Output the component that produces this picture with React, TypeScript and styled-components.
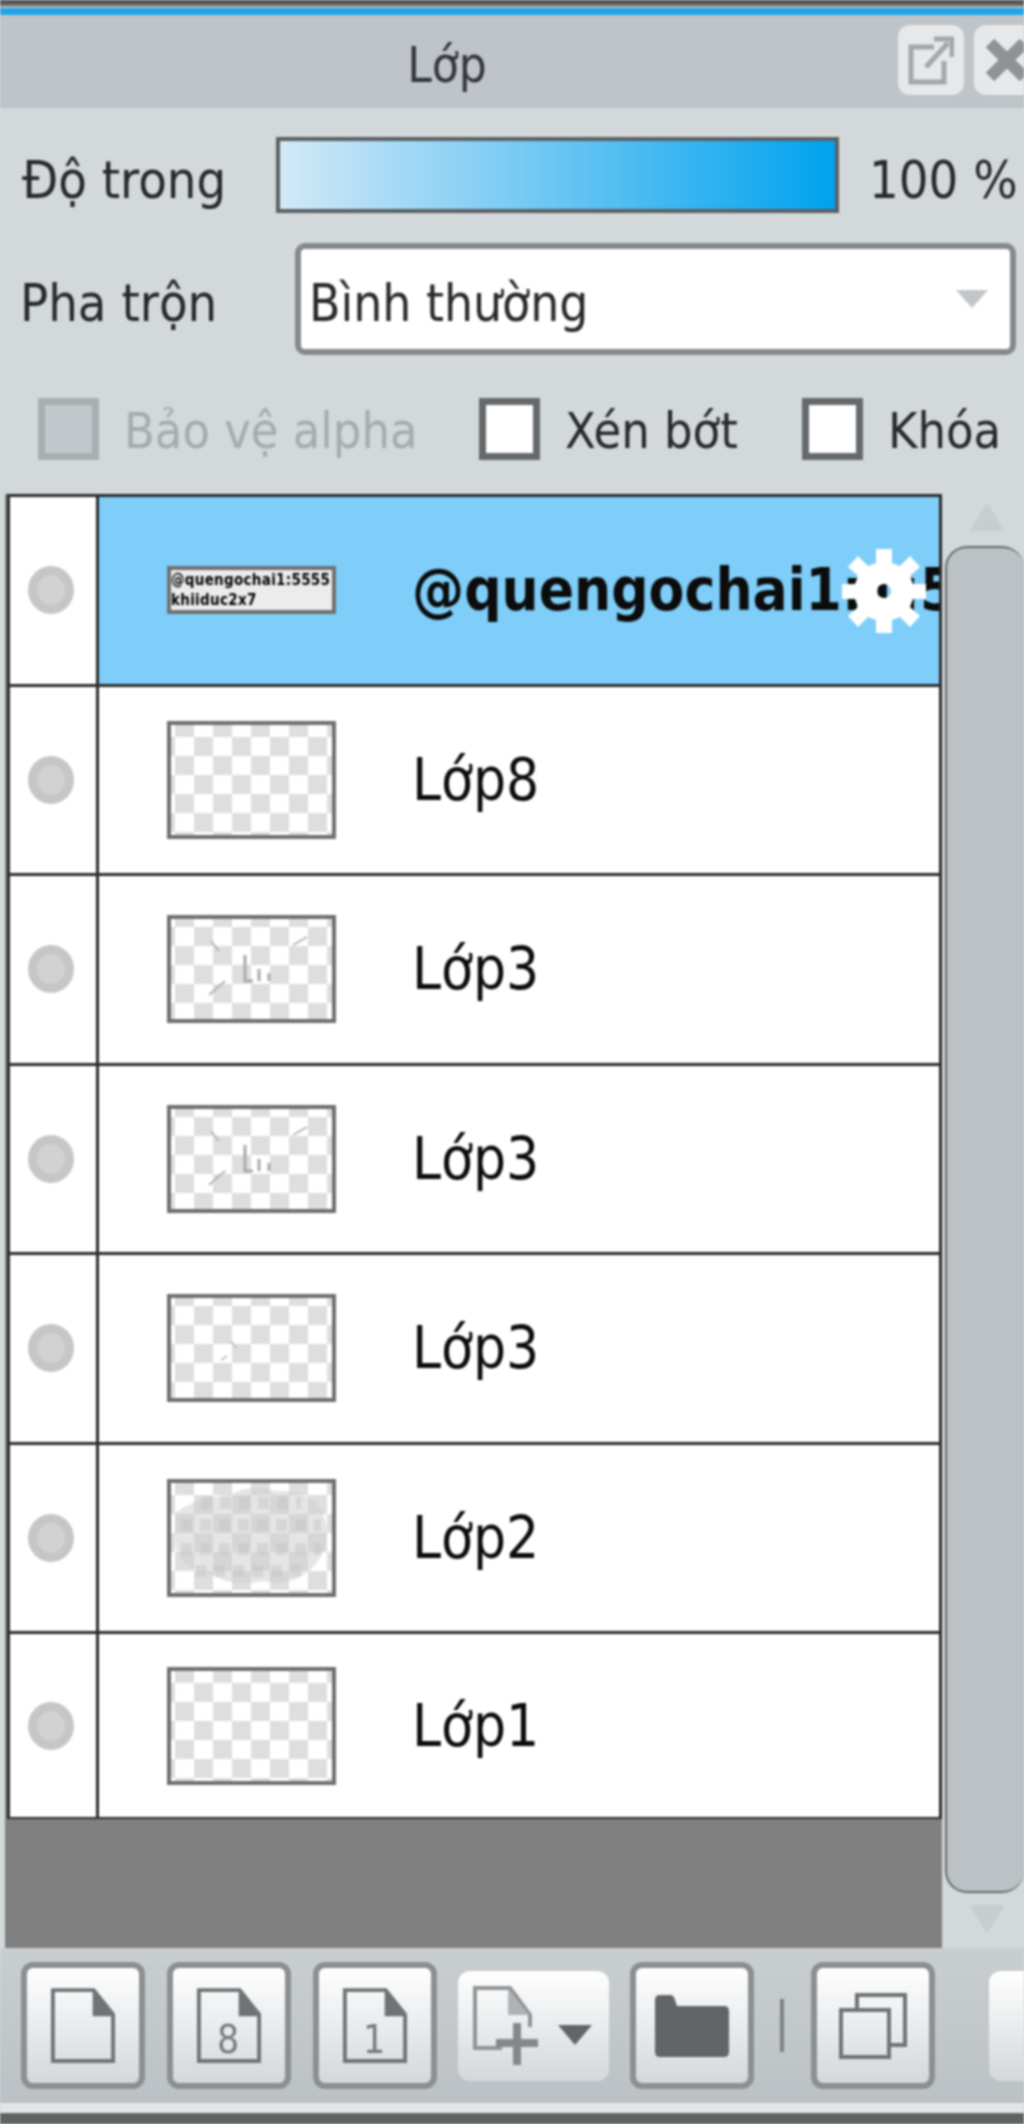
import { FC } from "react";
import styled, { createGlobalStyle } from "styled-components";

//types
type ThumbKind = "text" | "empty" | "marks" | "speck" | "blob";
type LayerData = { name: string; thumb: ThumbKind; height: number; active?: boolean };

const layers: LayerData[] = [
  { name: "@quengochai1:1:5555", thumb: "text", height: 48, active: true },
  { name: "Lớp8", thumb: "empty", height: 118 },
  { name: "Lớp3", thumb: "marks", height: 108 },
  { name: "Lớp3", thumb: "marks", height: 108 },
  { name: "Lớp3", thumb: "speck", height: 108 },
  { name: "Lớp2", thumb: "blob", height: 118 },
  { name: "Lớp1", thumb: "empty", height: 118 },
];

const GlobalStyle = createGlobalStyle`
  html, body {
    margin: 0;
    padding: 0;
    background: #d3d8db;
    overflow: hidden;
  }
`;

const Panel = styled.div`
  width: 1024px;
  height: 2124px;
  display: flex;
  flex-direction: column;
  overflow: hidden;
  background: #d3d8db;
  color: #26282b;
  font-family: "DejaVu Sans Condensed", "DejaVu Sans", sans-serif;
  font-stretch: condensed;
  font-size: 52px;
  filter: blur(1px);
`;

const WindowEdge = styled.div`
  height: 8px;
  flex: none;
  background: linear-gradient(#444 0, #666 60%, #d5d8da 100%);
`;

const AccentLine = styled.div`
  height: 7px;
  flex: none;
  background: #1ea6ea;
`;

const TitleBar = styled.div`
  height: 93px;
  flex: none;
  position: relative;
  display: flex;
  align-items: center;
  justify-content: center;
  padding: 8px 130px 0 0;
  box-sizing: border-box;
  background: #bfc4c8;
  font-size: 49px;
  color: #33363a;
`;

const TitleButtons = styled.div`
  position: absolute;
  top: 10px;
  left: 898px;
  display: flex;
  gap: 10px;
`;

const TitleButton = styled.div`
  width: 66px;
  height: 70px;
  flex: none;
  display: flex;
  align-items: center;
  justify-content: center;
  border-radius: 12px;
  background: #e6e8ea;
`;

const OpacityRow = styled.div`
  height: 76px;
  margin-top: 29px;
  flex: none;
  display: flex;
  align-items: center;
  padding-left: 22px;
`;

const OpacityLabel = styled.div`
  width: 254px;
  flex: none;
  padding-top: 10px;
  white-space: nowrap;
`;

const Slider = styled.div`
  width: 563px;
  height: 76px;
  flex: none;
  box-sizing: border-box;
  border: 4px solid #5b6063;
  background: linear-gradient(90deg, #d2e9f7, #00a2ef);
`;

const OpacityValue = styled.div`
  margin-left: 30px;
  padding-top: 10px;
  white-space: nowrap;
`;

const BlendRow = styled.div`
  height: 112px;
  margin-top: 30px;
  flex: none;
  display: flex;
  align-items: center;
  padding-left: 20px;
`;

const BlendLabel = styled.div`
  width: 275px;
  flex: none;
  padding-top: 8px;
  white-space: nowrap;
`;

const Select = styled.div`
  width: 721px;
  height: 112px;
  flex: none;
  box-sizing: border-box;
  display: flex;
  align-items: center;
  justify-content: space-between;
  padding: 8px 22px 0 8px;
  border: 6px solid #85898c;
  border-radius: 10px;
  background: #fff;
  font-size: 51px;
`;

const SelectArrow = styled.div`
  width: 0;
  height: 0;
  margin-top: -8px;
  border-left: 16px solid transparent;
  border-right: 16px solid transparent;
  border-top: 18px solid #c2c6c9;
`;

const OptionsRow = styled.div`
  height: 62px;
  margin-top: 43px;
  flex: none;
  display: flex;
  align-items: center;
  padding-left: 38px;
`;

const Option = styled.div<{ $width: number; $disabled?: boolean }>`
  width: ${(props) => props.$width}px;
  flex: none;
  display: flex;
  align-items: center;
  gap: 25px;
  white-space: nowrap;
  color: ${(props) => (props.$disabled ? "#a6abae" : "#26282b")};
  font-size: 50px;
`;

const OptionText = styled.span`
  padding-top: 3px;
`;

const CheckBox = styled.div<{ $disabled?: boolean }>`
  width: 61px;
  height: 62px;
  flex: none;
  box-sizing: border-box;
  border: 7px solid ${(props) => (props.$disabled ? "#a9aeb1" : "#65696c")};
  background: ${(props) => (props.$disabled ? "#c2c7cb" : "#fff")};
`;

const ListArea = styled.div`
  height: 1454px;
  margin-top: 34px;
  flex: none;
  display: flex;
`;

const ListColumn = styled.div`
  width: 937px;
  margin-left: 5px;
  flex: none;
  background: #808080;
`;

const LayerTable = styled.div`
  margin-left: 2px;
  width: 935px;
  box-sizing: border-box;
  border: 3px solid #2b2b2b;
  border-bottom-width: 2px;
  background: #fff;
`;

const LayerRow = styled.div<{ $last?: boolean }>`
  height: ${(props) => (props.$last ? 183 : 189.5)}px;
  box-sizing: border-box;
  display: flex;
  border-bottom: ${(props) => (props.$last ? "0" : "3px solid #2b2b2b")};
`;

const EyeCell = styled.div`
  width: 89px;
  flex: none;
  display: flex;
  align-items: center;
  padding-left: 18px;
  box-sizing: border-box;
  border-right: 3px solid #2b2b2b;
`;

const EyeDot = styled.div`
  width: 46px;
  height: 48px;
  box-sizing: border-box;
  border-radius: 50%;
  border: 9px solid #c6c6c6;
  background: #d2d2d2;
`;

const LayerBody = styled.div<{ $active?: boolean }>`
  flex: 1;
  min-width: 0;
  position: relative;
  overflow: hidden;
  display: flex;
  align-items: center;
  padding-left: 68px;
  background: ${(props) => (props.$active ? "#7ecef9" : "#fff")};
`;

const Thumb = styled.div<{ $height: number }>`
  position: relative;
  width: 169px;
  height: ${(props) => props.$height}px;
  flex: none;
  box-sizing: border-box;
  overflow: hidden;
  border: 4px solid #6f6f6f;
  background: repeating-conic-gradient(#dedede 0 25%, #fff 0 50%)
    4px ${(props) => (props.$height > 110 ? 12 : 8)}px / 38px 38px;
`;

const ThumbText = styled.div`
  background: #ececec;
  height: 100%;
  font-size: 15px;
  font-weight: 700;
  letter-spacing: 0.3px;
  line-height: 20px;
  color: #000;
  white-space: nowrap;
`;

const LayerName = styled.div<{ $active?: boolean }>`
  margin-left: 76px;
  white-space: nowrap;
  color: #0c0c0c;
  font-size: 58px;
  font-weight: ${(props) => (props.$active ? 700 : 400)};
`;

const GearOverlay = styled.div`
  position: absolute;
  left: 743px;
  top: 52px;
  display: flex;
`;

const ScrollColumn = styled.div`
  flex: 1;
  margin-left: 3px;
  display: flex;
  flex-direction: column;
  align-items: center;
`;

const ScrollArrow = styled.div<{ $down?: boolean }>`
  margin-top: ${(props) => (props.$down ? 12 : 9)}px;
  margin-left: 4px;
  width: 0;
  height: 0;
  flex: none;
  border-left: 18px solid transparent;
  border-right: 18px solid transparent;
  ${(props) =>
    props.$down
      ? "border-top: 28px solid #c8cdd0;"
      : "border-bottom: 28px solid #c8cdd0;"}
`;

const ScrollThumb = styled.div`
  margin-top: 15px;
  width: 100%;
  height: 1347px;
  flex: none;
  box-sizing: border-box;
  border: 2px solid #666a6d;
  border-right: 0;
  border-radius: 22px;
  background: #bcc1c5;
`;

const Toolbar = styled.div`
  height: 155px;
  flex: none;
  display: flex;
  align-items: center;
  padding: 0 0 0 21px;
  overflow: hidden;
  background: linear-gradient(#c9ced1, #bcc1c5);
`;

const ToolButton = styled.div<{ $plain?: boolean; $gap: number; $width?: number }>`
  width: ${(props) => props.$width || 124}px;
  height: 127px;
  flex: none;
  box-sizing: border-box;
  display: flex;
  align-items: center;
  justify-content: center;
  margin-right: ${(props) => props.$gap}px;
  border: ${(props) => (props.$plain ? "0" : "6px solid #8b8f92")};
  border-radius: 12px;
  background: linear-gradient(#fff, #d4d8db);
  ${(props) => props.$plain && "height: 110px;"}
`;

const ToolSeparator = styled.div`
  width: 4px;
  height: 53px;
  flex: none;
  margin-right: 27px;
  background: #7d8184;
`;

const BottomEdge = styled.div`
  flex: 1;
  border-top: 10px solid #e3e6e8;
  background: #5f6462;
`;

const PageIcon: FC<{ label?: string }> = ({ label }) => (
  <svg width="66" height="78" viewBox="0 0 68 80">
    <path d="M3 3H45L65 28V76H3Z" fill="none" stroke="#6f7376" strokeWidth="4" />
    <path d="M44 3L66 30H44Z" fill="#6f7376" />
    {label && (
      <text x="33" y="68" textAnchor="middle" fontSize="40" fill="#77797c">
        {label}
      </text>
    )}
  </svg>
);

const NewFromIcon = () => (
  <svg width="124" height="82" viewBox="0 0 124 82">
    <path d="M30 63H3V3H38L58 30V42" fill="none" stroke="#909396" strokeWidth="4" />
    <path d="M36 3L57 30H36Z" fill="#b0b3b6" />
    <path d="M45 38V80M24 58H66" stroke="#85888b" strokeWidth="8" />
    <path d="M86 40H120L103 60Z" fill="#626568" />
  </svg>
);

const FolderIcon = () => (
  <svg width="76" height="64" viewBox="0 0 76 64">
    <path d="M1 6Q1 1 6 1H16Q20 1 21 6L23 12H70Q75 12 75 17V58Q75 63 70 63H6Q1 63 1 58Z" fill="#626568" />
  </svg>
);

const CopyIcon = () => (
  <svg width="70" height="68" viewBox="0 0 70 68">
    <path d="M19 18V3H67V53H52" fill="none" stroke="#6f7376" strokeWidth="4" />
    <rect x="3" y="18" width="48" height="47" fill="none" stroke="#6f7376" strokeWidth="4" />
  </svg>
);

const PopoutIcon = () => (
  <svg width="46" height="50" viewBox="0 0 46 50">
    <path d="M26 12H3V47H36V26" fill="none" stroke="#a3a7aa" strokeWidth="5" />
    <path d="M18 32L40 8M26 4H44V22" fill="none" stroke="#a3a7aa" strokeWidth="5" />
  </svg>
);

const CloseIcon = () => (
  <svg width="46" height="46" viewBox="0 0 46 46">
    <path d="M6 6L40 40M40 6L6 40" stroke="#8f9396" strokeWidth="12" />
  </svg>
);

// the hole in the middle lets the layer name show through
const GearIcon = () => (
  <svg width="84" height="84" viewBox="0 0 84 84">
    <path
      fill="#fff"
      fillRule="evenodd"
      d="M34 0H50V14L58 17L68 7L78 18L68 27L71 35H84V50H71L68 58L78 67L68 78L58 68L50 71V84H34V71L26 68L16 78L6 67L16 58L13 50H0V35H13L16 27L6 18L16 7L26 17L34 14ZM42 35A7 7 0 1 0 42.01 35Z"
    />
  </svg>
);

const ThumbMarks: FC<{ kind: ThumbKind }> = ({ kind }) => {
  if (kind === "marks") {
    return (
      <svg width="161" height="100" viewBox="0 0 161 100">
        <path d="M74 36V62H82M88 50V62M98 54V62" stroke="#a9a9a9" strokeWidth="3" fill="none" />
        <path d="M38 76L54 62M122 26L136 18M40 22L48 32" stroke="#b4b4b4" strokeWidth="2" fill="none" />
      </svg>
    );
  }
  if (kind === "speck") {
    return (
      <svg width="161" height="100" viewBox="0 0 161 100">
        <path d="M60 44L66 50M50 62L56 58" stroke="#c2c2c2" strokeWidth="2" fill="none" />
      </svg>
    );
  }
  if (kind === "blob") {
    return (
      <svg width="161" height="110" viewBox="0 0 161 110">
        <path
          d="M4 30Q30 12 60 12Q80 0 104 8Q146 6 154 36Q162 66 138 88Q118 104 92 98Q60 104 42 92Q6 86 4 58Z"
          fill="#cfcfcf"
          opacity="0.55"
        />
        <path
          d="M10 42H150M10 66H150M24 88H130M30 20H130"
          stroke="#c4c4c4"
          strokeWidth="12"
          strokeDasharray="11 8"
          opacity="0.45"
        />
      </svg>
    );
  }
  return null;
};

const LayerItem: FC<{ layer: LayerData; last: boolean }> = ({ layer, last }) => (
  <LayerRow $last={last}>
    <EyeCell>
      <EyeDot />
    </EyeCell>
    <LayerBody $active={layer.active}>
      <Thumb $height={layer.height}>
        {layer.thumb === "text" ? (
          <ThumbText>
            @quengochai1:5555
            <br />
            khiiduc2x7
          </ThumbText>
        ) : (
          <ThumbMarks kind={layer.thumb} />
        )}
      </Thumb>
      <LayerName $active={layer.active}>{layer.name}</LayerName>
      {layer.active && (
        <GearOverlay>
          <GearIcon />
        </GearOverlay>
      )}
    </LayerBody>
  </LayerRow>
);

const App = () => {
  return (
    <Panel>
      <GlobalStyle />
      <WindowEdge />
      <AccentLine />
      <TitleBar>
        Lớp
        <TitleButtons>
          <TitleButton>
            <PopoutIcon />
          </TitleButton>
          <TitleButton>
            <CloseIcon />
          </TitleButton>
        </TitleButtons>
      </TitleBar>

      <OpacityRow>
        <OpacityLabel>Độ trong</OpacityLabel>
        <Slider />
        <OpacityValue>100 %</OpacityValue>
      </OpacityRow>

      <BlendRow>
        <BlendLabel>Pha trộn</BlendLabel>
        <Select>
          Bình thường
          <SelectArrow />
        </Select>
      </BlendRow>

      <OptionsRow>
        <Option $width={441} $disabled>
          <CheckBox $disabled />
          <OptionText>Bảo vệ alpha</OptionText>
        </Option>
        <Option $width={323}>
          <CheckBox />
          <OptionText>Xén bớt</OptionText>
        </Option>
        <Option $width={222}>
          <CheckBox />
          <OptionText>Khóa</OptionText>
        </Option>
      </OptionsRow>

      <ListArea>
        <ListColumn>
          <LayerTable>
            {layers.map((layer, i) => (
              <LayerItem key={i} layer={layer} last={i === layers.length - 1} />
            ))}
          </LayerTable>
        </ListColumn>
        <ScrollColumn>
          <ScrollArrow />
          <ScrollThumb />
          <ScrollArrow $down />
        </ScrollColumn>
      </ListArea>

      <Toolbar>
        <ToolButton $gap={22}>
          <PageIcon />
        </ToolButton>
        <ToolButton $gap={22}>
          <PageIcon label="8" />
        </ToolButton>
        <ToolButton $gap={21}>
          <PageIcon label="1" />
        </ToolButton>
        <ToolButton $plain $gap={21} $width={151}>
          <NewFromIcon />
        </ToolButton>
        <ToolButton $gap={26}>
          <FolderIcon />
        </ToolButton>
        <ToolSeparator />
        <ToolButton $gap={54}>
          <CopyIcon />
        </ToolButton>
        <ToolButton $plain $gap={0}></ToolButton>
      </Toolbar>
      <BottomEdge />
    </Panel>
  );
};

export default App;
